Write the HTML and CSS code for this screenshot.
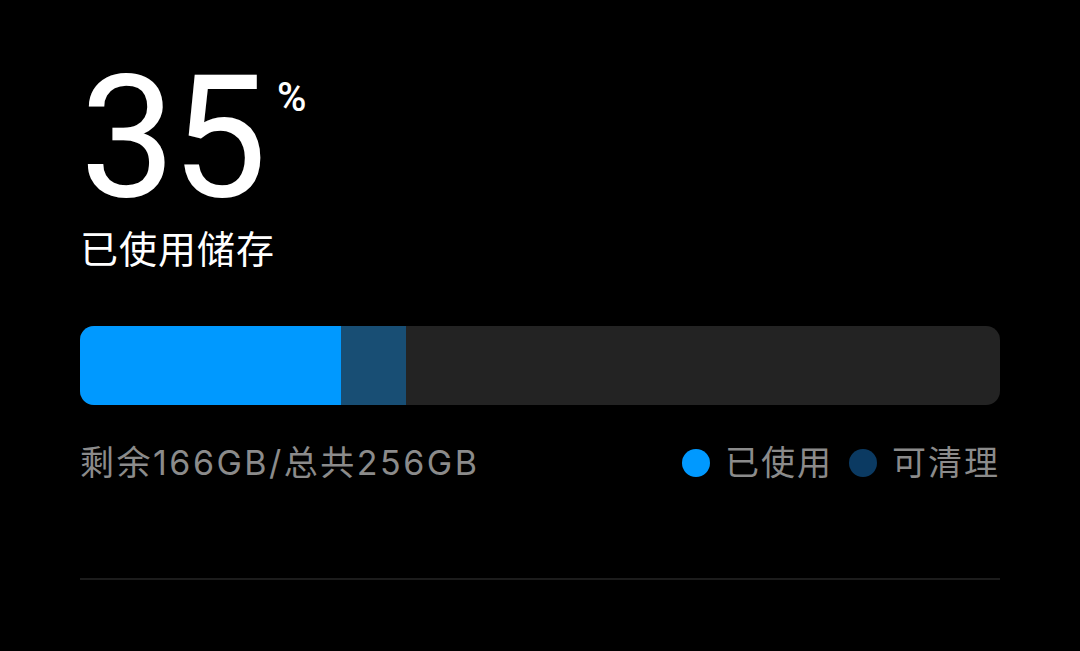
FILE: index.html
```html
<!DOCTYPE html>
<html lang="zh-CN">
<head>
  <meta charset="UTF-8" />
  <meta name="viewport" content="width=device-width, initial-scale=1.0"/>
  <title>存储</title>
  <link rel="stylesheet" href="styles.css">
</head>
<body>
  <div class="storage">
    <div class="usage">
      <span class="num">35</span><span class="pct">%</span>
    </div>
    <div class="label">已使用储存</div>

    <div class="bar">
      <div class="used" style="width: 28.4%"></div>
      <div class="clean" style="width: 7%"></div>
    </div>

    <div class="info">
      <div class="free">剩余166GB/总共256GB</div>
      <div class="legend">
        <span class="dot dot-used"></span><span>已使用</span>
        <span class="dot dot-clean"></span><span>可清理</span>
      </div>
    </div>

    <div class="divider"></div>
  </div>
</body>
</html>
```

FILE: styles.css
```css
body {
  margin: 0;
  background: #000;
  color: #fff;
  font-family: Roboto, "Noto Sans CJK SC", sans-serif;
}
.storage {
  width: 920px;
  padding: 66px 80px 0 80px;
}
.usage {
  display: flex;
  align-items: flex-start;
  height: 145px;
}
.num {
  font-size: 170px;
  font-weight: 400;
  line-height: 145px;
  letter-spacing: -4px;
}
.pct {
  font-size: 40px;
  font-weight: 500;
  margin-top: 12px;
  margin-left: 14px;
  line-height: 40px;
}
.label {
  font-size: 38px;
  line-height: 50px;
  margin-top: 11px;
  letter-spacing: 1px;
  font-family: "Noto Sans CJK SC", sans-serif;
}
.bar {
  display: flex;
  height: 79px;
  margin-top: 54px;
  background: #232323;
  border-radius: 14px;
  overflow: hidden;
}
.used { background: #0099ff; }
.clean { background: #184e74; }
.info {
  display: flex;
  justify-content: space-between;
  align-items: center;
  margin-top: 38px;
  color: #8b8b8b;
  line-height: 40px;
  font-family: Inter, "Noto Sans CJK SC", sans-serif;
}
.free {
  font-size: 34px;
  letter-spacing: 2.5px;
}
.legend {
  display: flex;
  align-items: center;
  font-size: 34px;
  letter-spacing: 2px;
}
.dot {
  width: 28px;
  height: 28px;
  border-radius: 50%;
  margin-right: 15px;
}
.dot-used { background: #0099ff; }
.dot-clean { background: #0b3a62; margin-left: 16px; }
.divider {
  height: 2px;
  background: #1c1c1c;
  margin-top: 95px;
}
```
